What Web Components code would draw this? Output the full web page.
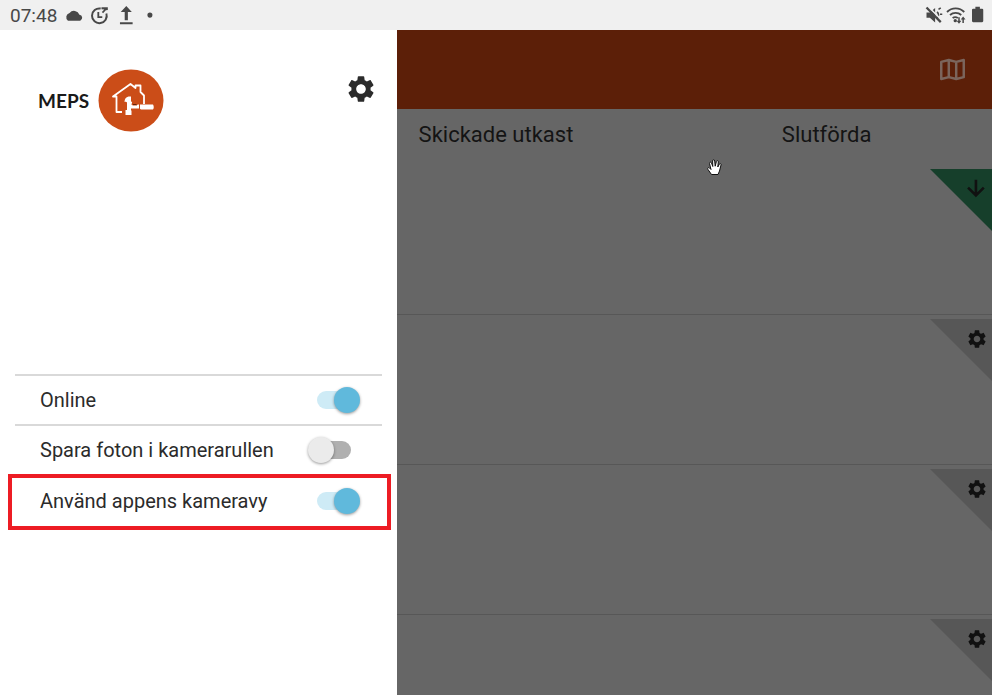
<!DOCTYPE html>
<html lang="sv">
<head>
  <meta charset="utf-8">
  <meta name="viewport" content="width=device-width, initial-scale=1">
  <title>MEPS</title>
  <style>
    body {
      margin: 0;
      height: 100vh;
      overflow: hidden;
      font-family: Roboto, "Liberation Sans", sans-serif;
      background: #fff;
    }
  </style>
</head>
<body>
  <meps-app></meps-app>

  <script>
    const icons = {
      gear: '<path fill="currentColor" d="M19.14,12.94c0.04-0.3,0.06-0.61,0.06-0.94c0-0.32-0.02-0.64-0.07-0.94l2.03-1.58c0.18-0.14,0.23-0.41,0.12-0.61l-1.92-3.32c-0.12-0.22-0.37-0.29-0.59-0.22l-2.39,0.96c-0.5-0.38-1.03-0.7-1.62-0.94L14.4,2.81c-0.04-0.24-0.24-0.41-0.48-0.41h-3.84c-0.24,0-0.43,0.17-0.47,0.41L9.25,5.35C8.66,5.59,8.12,5.92,7.63,6.29L5.24,5.33c-0.22-0.08-0.47,0-0.59,0.22L2.74,8.87C2.62,9.08,2.66,9.34,2.86,9.48l2.03,1.58C4.84,11.36,4.8,11.69,4.8,12s0.02,0.64,0.07,0.94l-2.03,1.58c-0.18,0.14-0.23,0.41-0.12,0.61l1.92,3.32c0.12,0.22,0.37,0.29,0.59,0.22l2.39-0.96c0.5,0.38,1.03,0.7,1.62,0.94l0.36,2.54c0.05,0.24,0.24,0.41,0.48,0.41h3.84c0.24,0,0.44-0.17,0.47-0.41l0.36-2.54c0.59-0.24,1.13-0.56,1.62-0.94l2.39,0.96c0.22,0.08,0.47,0,0.59-0.22l1.92-3.32c0.12-0.22,0.07-0.47-0.12-0.61L19.14,12.94z M12,15.6c-1.98,0-3.6-1.62-3.6-3.6s1.62-3.6,3.6-3.6s3.6,1.62,3.6,3.6S13.98,15.6,12,15.6z"/>',
      arrow: '<path fill="none" stroke="currentColor" stroke-width="3" d="M12.500 2v17M3.500 11l9 9 9-9"/>',
      map: '<path fill="none" stroke="currentColor" stroke-width="2.2" stroke-linejoin="round" d="M2 5.2 8.7 3.500l6.600 1.700L22 3.500v15.300L15.300 20.500l-6.600-1.700L2 20.500zM8.700 3.500v15.300M15.300 5.200v15.300"/>',
      cloud: '<path fill="currentColor" d="M19.500 11A7.300 7.300 0 0 0 7 8.800 5.500 5.500 0 0 0 5 18.500h15.500a3.900 3.900 0 0 0-1-7.500z"/>',
      clock: '<path fill="none" stroke="currentColor" stroke-width="2.500" d="M13.500 3.200A9.300 9.300 0 1 0 20.700 9.500"/><path fill="none" stroke="currentColor" stroke-width="2.300" d="M10.500 7.500V14h5"/><path fill="currentColor" d="M14.500 1.500H22.500V5L20 5.500 16.500 9 15 7.500 18 4.500 14.500 4z"/>',
      upload: '<path fill="currentColor" d="M13 0 6 7.500h5V18h4V7.500h5zM5 20.500h16V23H5z"/>',
      muted: '<path fill="currentColor" d="M2 8.500v7h4.500L13.500 22V2.500l-7 6z"/><path fill="none" stroke="currentColor" stroke-width="2.200" d="M16 8a5 5 0 0 1 0 8M18 4.500l3-2M20 11h3"/><path stroke="#f0f0f0" stroke-width="2" d="M4 .5 23 19.500"/><path stroke="currentColor" stroke-width="3" d="M2 2 21 21.500"/>',
      wifi: '<path fill="none" stroke="currentColor" stroke-width="2.400" d="M0 8a16 16 0 0 1 23 0M4 12a11 11 0 0 1 15 0M7.500 16a6 6 0 0 1 7 0"/><circle cx="11" cy="19.500" r="2.200" fill="currentColor"/><path fill="currentColor" d="M15 15h2v4.500h2.200L16 23.500l-3.200-4H15zM20.500 22.500h2V18h2.200l-3.200-4-3.200 4h2.200z"/>',
      battery: '<path fill="currentColor" d="M8.500 1h6v2.500h3a1.500 1.500 0 0 1 1.500 1.500v15a1.500 1.500 0 0 1-1.500 1.500h-12A1.500 1.500 0 0 1 4 20V5a1.500 1.500 0 0 1 1.500-1.500h3z"/>',
      dot: '<circle cx="10" cy="11.500" r="3.200" fill="currentColor"/>'
    };

    // <meps-icon name="gear">, sized with --size
    class MepsIcon extends HTMLElement {
      connectedCallback() {
        this.attachShadow({ mode: 'open' });
        this.shadowRoot.innerHTML = `
          <style>
            :host {
              display: block;
              flex: none;
              width: var(--size, 24px);
              height: var(--size, 24px);
            }

            svg {
              display: block;
              width: 100%;
              height: 100%;
              overflow: visible;
            }
          </style>
          <svg viewBox="0 0 24 24" aria-hidden="true">${icons[this.getAttribute('name')]}</svg>
        `;
      }
    }

    class StatusBar extends HTMLElement {
      connectedCallback() {
        this.attachShadow({ mode: 'open' });
        this.shadowRoot.innerHTML = `
          <style>
            :host {
              display: flex;
              justify-content: space-between;
              align-items: center;
              box-sizing: border-box;
              height: 30px;
              padding: 0 5px 0 10px;
              background: #f0f0f0;
              color: #484848;
              font-size: 19px;
            }

            div {
              display: flex;
              align-items: center;
              gap: 7px;
            }

            .right {
              gap: 4px;
            }

            meps-icon {
              --size: 19px;
            }

            .right meps-icon {
              --size: 18px;
            }
          </style>
          <div>
            <time>07:48</time>
            <meps-icon name="cloud"></meps-icon>
            <meps-icon name="clock"></meps-icon>
            <meps-icon name="upload"></meps-icon>
            <meps-icon name="dot"></meps-icon>
          </div>
          <div class="right">
            <meps-icon name="muted"></meps-icon>
            <meps-icon name="wifi"></meps-icon>
            <meps-icon name="battery"></meps-icon>
          </div>
        `;
      }
    }

    class MepsLogo extends HTMLElement {
      connectedCallback() {
        this.attachShadow({ mode: 'open' });
        this.shadowRoot.innerHTML = `
          <style>
            :host {
              display: flex;
              align-items: center;
              gap: 9px;
              color: #1a1a1a;
              font-family: Lato, "Liberation Sans", sans-serif;
              font-size: 19px;
              font-weight: 700;
            }

            svg {
              display: block;
              width: 66px;
              height: 64px;
            }
          </style>
          <span>MEPS</span>
          <svg viewBox="0 0 66 64" aria-hidden="true">
            <ellipse cx="33" cy="32.500" rx="32.500" ry="31" fill="#cb4d18"/>
            <path fill="none" stroke="#fff" stroke-width="1.800" stroke-linejoin="round" d="M24 44H18.500V28.500H15L32.500 16l5 4v-2.500h5V24l3.500 3.500V36"/>
            <path fill="#fff" d="M26.500 34c0-3 1.500-5 4-5.500h2.500v5c1.500 0 1.500 2 0 3h22c1 1.500 1 4 0 5H43l-1.500-1H33v2h.500v4.500h-6V42H29v-7.500c-.5-.8-1.500-1-2.500-.5z"/>
            <path stroke="#cb4d18" d="M34.500 35.500h4.500v1.500h-4.500zM41.500 36v5.500"/>
          </svg>
        `;
      }
    }

    class SettingRow extends HTMLElement {
      connectedCallback() {
        this.attachShadow({ mode: 'open' });
        this.shadowRoot.innerHTML = `
          <style>
            :host {
              display: block;
              box-sizing: border-box;
              height: 50px;
              border-top: 2px solid #d9d9d9;
              padding: 0 26px 0 25px;
            }

            :host([marked]) {
              height: 56px;
              margin: 0 -9px 0 -7px;
              border: 4px solid #ed1c24;
              padding: 0 31px 2px 28px;
            }

            label {
              display: flex;
              justify-content: space-between;
              align-items: center;
              height: 100%;
              color: #2b2b2b;
              font-size: 20px;
              line-height: 24px;
            }

            input {
              appearance: none;
              position: relative;
              flex: none;
              width: 34px;
              height: 18px;
              margin: 0 5px 0 0;
              border-radius: 9px;
              background: #b0b0b0;
            }

            input::before {
              content: '';
              position: absolute;
              top: -4px;
              left: -9px;
              width: 26px;
              height: 26px;
              border-radius: 50%;
              background: #ebebeb;
              box-shadow: 0 1px 3px rgba(0, 0, 0, 0.4);
            }

            input:checked {
              background: #ceebf6;
            }

            input:checked::before {
              left: 17px;
              background: #60b9dc;
            }
          </style>
          <label>
            <slot></slot>
            <input type="checkbox" role="switch" ${this.hasAttribute('on') ? 'checked' : ''}>
          </label>
        `;
      }
    }

    class SideDrawer extends HTMLElement {
      connectedCallback() {
        this.attachShadow({ mode: 'open' });
        this.shadowRoot.innerHTML = `
          <style>
            :host {
              display: block;
              background: #fff;
            }

            header {
              display: flex;
              justify-content: space-between;
              align-items: flex-start;
              box-sizing: border-box;
              height: 344px;
              padding: 38px 20px 0 38px;
            }

            button {
              margin: 5px 0 0;
              border: 0;
              padding: 0;
              background: none;
              color: #2b2b2b;
            }

            button meps-icon {
              --size: 32px;
            }

            section {
              margin: 0 15px;
            }
          </style>
          <header>
            <meps-logo></meps-logo>
            <button aria-label="Inställningar"><meps-icon name="gear"></meps-icon></button>
          </header>
          <section>
            <setting-row on>Online</setting-row>
            <setting-row>Spara foton i kamerarullen</setting-row>
            <setting-row marked on>Använd appens kameravy</setting-row>
          </section>
        `;
      }
    }

    class ErrandRow extends HTMLElement {
      connectedCallback() {
        const icon = this.getAttribute('icon');
        this.attachShadow({ mode: 'open' });
        this.shadowRoot.innerHTML = `
          <style>
            :host {
              display: flex;
              justify-content: flex-end;
              flex: none;
              box-sizing: border-box;
              height: 150px;
              border-bottom: 1px solid #575757;
              padding-top: 4px;
            }

            .corner {
              display: flex;
              justify-content: flex-end;
              align-items: flex-start;
              box-sizing: border-box;
              width: 62px;
              height: 62px;
              padding: 9px 4px 0 0;
              background: #575757;
              clip-path: polygon(0 0, 100% 0, 100% 100%);
              color: #111;
            }

            .corner.arrow {
              padding-right: 6px;
              background: #163f2b;
            }

            meps-icon {
              --size: 22px;
            }

            .arrow meps-icon {
              --size: 21px;
            }
          </style>
          <div class="corner ${icon}"><meps-icon name="${icon}"></meps-icon></div>
        `;
      }
    }

    class ErrandPage extends HTMLElement {
      connectedCallback() {
        this.attachShadow({ mode: 'open' });
        this.shadowRoot.innerHTML = `
          <style>
            :host {
              display: flex;
              flex-direction: column;
              position: relative;
              overflow: hidden;
              background: #666;
            }

            header {
              display: flex;
              flex: none;
              justify-content: flex-end;
              align-items: center;
              height: 79px;
              padding-right: 26px;
              background: #5c1f08;
            }

            button {
              border: 0;
              padding: 0;
              background: none;
              color: #7b655c;
              font: inherit;
            }

            header meps-icon {
              --size: 27px;
            }

            /* the first third lies under the drawer */
            nav {
              display: grid;
              flex: none;
              grid-template-columns: 1fr 1fr;
              height: 56px;
              padding-left: 33.333%;
            }

            nav button {
              padding-bottom: 5px;
              color: #141414;
              font-size: 22px;
            }

            .hand {
              position: absolute;
              top: 129px;
              right: 270px;
              width: 15px;
              height: 17px;
            }
          </style>
          <header>
            <button aria-label="Karta"><meps-icon name="map"></meps-icon></button>
          </header>
          <nav>
            <button>Skickade utkast</button>
            <button>Slutförda</button>
          </nav>
          <errand-row icon="arrow"></errand-row>
          <errand-row icon="gear"></errand-row>
          <errand-row icon="gear"></errand-row>
          <errand-row icon="gear"></errand-row>
          <svg class="hand" viewBox="0 0 15 17" aria-hidden="true">
            <path fill="#fff" stroke="#111" stroke-linejoin="round" d="M4.500 15.500 1 10.500C0 9 1.500 8 2.600 9L4 10.500 2.500 4.500C2.200 3 4 2.500 4.500 4L5.800 7.500 5.600 2C5.600.300 7.500.300 7.700 2L8.200 7.200 9.400 2.500C9.800 1 11.500 1.500 11.300 3L10.800 8 12.300 5.200C13 4 14.500 4.600 14 6L12.500 12 11 15.500z"/>
          </svg>
        `;
      }
    }

    class MepsApp extends HTMLElement {
      connectedCallback() {
        this.attachShadow({ mode: 'open' });
        this.shadowRoot.innerHTML = `
          <style>
            :host {
              display: grid;
              grid-template-rows: auto minmax(0, 1fr);
              grid-template-columns: 2fr 3fr;
              height: 100%;
            }

            status-bar {
              grid-column: 1 / -1;
            }

            errand-page {
              grid-row: 2;
              grid-column: 1 / -1;
            }

            side-drawer {
              grid-row: 2;
              grid-column: 1;
              z-index: 1;
            }
          </style>
          <status-bar></status-bar>
          <errand-page></errand-page>
          <side-drawer></side-drawer>
        `;
      }
    }

    customElements.define('meps-icon', MepsIcon);
    customElements.define('status-bar', StatusBar);
    customElements.define('meps-logo', MepsLogo);
    customElements.define('setting-row', SettingRow);
    customElements.define('side-drawer', SideDrawer);
    customElements.define('errand-row', ErrandRow);
    customElements.define('errand-page', ErrandPage);
    customElements.define('meps-app', MepsApp);
  </script>
</body>
</html>
